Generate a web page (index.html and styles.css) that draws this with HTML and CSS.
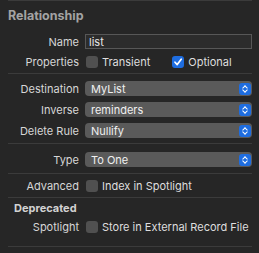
FILE: index.html
```html
<!DOCTYPE html>
<html lang="en">
<head>
  <meta charset="UTF-8">
  <title>Relationship</title>
  <link rel="stylesheet" href="styles.css">
</head>
<body>
  <div class="inspector">
    <div class="sep"></div>
    <h2 class="section-title">Relationship</h2>

    <div class="row row-name">
      <span class="label">Name</span>
      <input class="field" type="text" value="list">
    </div>
    <div class="row row-props">
      <span class="label">Properties</span>
      <div class="checks">
        <label class="check"><span class="box"></span>Transient</label>
        <label class="check check-opt"><span class="box on">
          <svg width="10" height="10" viewBox="0 0 10 10"><path d="M2 5.2 L4.2 7.6 L8.2 2.2" fill="none" stroke="#fff" stroke-width="1.7" stroke-linecap="round" stroke-linejoin="round"/></svg>
        </span>Optional</label>
      </div>
    </div>
    <div class="sep sep-props"></div>

    <div class="group group-rel">
      <div class="row row-pop">
        <span class="label">Destination</span>
        <div class="popup"><span class="popup-text">MyList</span><span class="arrows"></span></div>
      </div>
      <div class="row row-pop">
        <span class="label">Inverse</span>
        <div class="popup"><span class="popup-text">reminders</span><span class="arrows"></span></div>
      </div>
      <div class="row row-pop">
        <span class="label">Delete Rule</span>
        <div class="popup"><span class="popup-text">Nullify</span><span class="arrows"></span></div>
      </div>
    </div>
    <div class="sep"></div>

    <div class="group group-type">
      <div class="row row-pop">
        <span class="label">Type</span>
        <div class="popup"><span class="popup-text">To One</span><span class="arrows"></span></div>
      </div>
    </div>
    <div class="sep"></div>

    <div class="group group-adv">
      <div class="row row-check">
        <span class="label">Advanced</span>
        <label class="check"><span class="box"></span>Index in Spotlight</label>
      </div>
    </div>
    <div class="sep"></div>

    <div class="group group-dep">
      <h3 class="sub-title">Deprecated</h3>
      <div class="row row-check">
        <span class="label">Spotlight</span>
        <label class="check"><span class="box"></span>Store in External Record File</label>
      </div>
    </div>
    <div class="sep"></div>
  </div>
</body>
</html>
```

FILE: styles.css
```css
body {
  margin: 0;
  padding: 0;
  background: #262626;
  font-family: 'Inter', 'Liberation Sans', sans-serif;
  font-size: 11px;
  color: #dedede;
  height: 253px;
  overflow: hidden;
}

.inspector {
  padding: 0 7px 0 8px;
}

.sep {
  height: 1px;
  background: #3b3b3b;
}

.section-title {
  margin: 0;
  height: 29px;
  line-height: 29px;
  font-size: 12.5px;
  font-weight: 700;
  color: #a3a3a3;
}

.row {
  display: grid;
  grid-template-columns: 71px minmax(0, 1fr);
  column-gap: 6px;
  align-items: center;
}

.label {
  text-align: right;
  color: #d6d6d6;
  white-space: nowrap;
}

/* name field */
.row-name {
  height: 23px;
}

.field {
  box-sizing: border-box;
  width: 100%;
  min-width: 0;
  height: 15px;
  margin: 0;
  padding: 0 3px;
  border: 1px solid #575757;
  background: #2c2c2c;
  color: #e6e6e6;
  font-family: inherit;
  font-size: 11px;
  outline: none;
}

.row-props {
  height: 18px;
}

.sep-props {
  margin-top: 2px;
}

/* checkboxes */
.checks {
  display: flex;
}

.check {
  display: flex;
  align-items: center;
  white-space: nowrap;
  color: #dedede;
}

.check-opt {
  margin-left: 21px;
}

.box {
  box-sizing: border-box;
  width: 12px;
  height: 12px;
  margin-left: 1px;
  margin-right: 4px;
  border-radius: 3px;
  background: #505050;
  display: flex;
  align-items: center;
  justify-content: center;
}

.box.on {
  background: #1e6de0;
}

/* popups */
.group-rel {
  padding: 4px 0 2px;
}

.group-type {
  padding: 5px 0 3px;
}

.row-pop {
  height: 21px;
}

.popup {
  height: 15px;
  background: #5a5a5a;
  border-radius: 4px;
  display: flex;
  align-items: center;
  justify-content: space-between;
  padding: 0 1px 0 6px;
}

.popup-text {
  color: #f0f0f0;
}

.arrows {
  position: relative;
  width: 12px;
  height: 12px;
  border-radius: 3px;
  background: #1e6de0;
}

.arrows:before,
.arrows:after {
  content: "";
  position: absolute;
  left: 4px;
  width: 3px;
  height: 3px;
  border-left: 1.2px solid #fff;
  border-top: 1.2px solid #fff;
}

.arrows:before {
  top: 3px;
  transform: rotate(45deg);
}

.arrows:after {
  top: 5.5px;
  transform: rotate(225deg);
}

/* advanced / deprecated */
.group-adv {
  padding-top: 1px;
}

.row-check {
  height: 22px;
}

.group-dep {
  padding: 1px 0 10px;
}

.sub-title {
  margin: 0 0 0 6px;
  height: 19px;
  line-height: 19px;
  font-size: 11px;
  font-weight: 700;
  color: #d2d2d2;
}

.group-dep .row-check {
  height: 18px;
}
```
